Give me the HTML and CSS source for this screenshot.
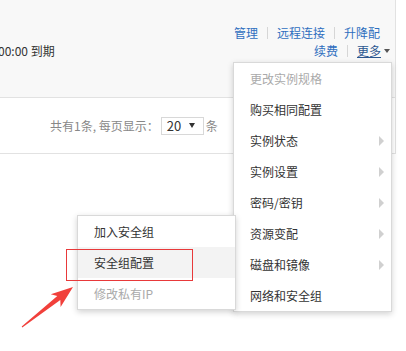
FILE: index.html
```html
<!DOCTYPE html>
<html lang="zh-CN">
<head>
    <meta charset="UTF-8">
    <meta name="viewport" content="width=device-width, initial-scale=1.0">
    <title>实例列表</title>
    <link rel="stylesheet" href="styles.css">
</head>
<body>

    <div class="panel">
        <div class="inst-row">
            <div class="expire">00:00 到期</div>
            <div class="actions">
                <div class="action-line first">
                    <a class="link">管理</a><span class="sep"></span><a class="link">远程连接</a><span class="sep"></span><a class="link">升降配</a>
                </div>
                <div class="action-line">
                    <a class="link">续费</a><span class="sep"></span><a class="more">更多</a><span class="caret"></span>
                </div>
            </div>
        </div>
        <div class="pager">
            共有1条, 每页显示：<span class="page-size"><span>20</span><span class="select-caret"></span></span>条
        </div>
    </div>

    <ul class="dropdown">
        <li class="disabled">更改实例规格</li>
        <li>购买相同配置</li>
        <li class="has-sub">实例状态</li>
        <li class="has-sub">实例设置</li>
        <li class="has-sub">密码/密钥</li>
        <li class="has-sub">资源变配</li>
        <li class="has-sub">磁盘和镜像</li>
        <li>网络和安全组</li>
    </ul>

    <ul class="submenu">
        <li>加入安全组</li>
        <li class="active">安全组配置</li>
        <li class="disabled">修改私有IP</li>
    </ul>

    <div class="mark"></div>

    <svg class="arrow" width="406" height="351" viewBox="0 0 406 351">
        <polygon fill="#f1403b" points="22.3,327.4 60.3,300.1 60.6,306.9 73,287 50.8,294.3 57.3,296.1 21.7,326.6"/>
    </svg>

</body>
</html>
```

FILE: styles.css
```css
body {
    margin: 0;
    font-family: "Microsoft YaHei", "Noto Sans CJK SC", sans-serif;
    font-size: 12px;
    color: #333;
    background: #fff;
    position: relative;
    height: 351px;
    overflow: hidden;
}
.panel {
    width: 395px;
    border-right: 1px solid #e2e2e2;
}
.inst-row {
    display: flex;
    justify-content: space-between;
    align-items: flex-start;
    height: 97px;
    background: #f8f8f8;
    border-bottom: 1px solid #e2e2e2;
}
.expire {
    margin-left: -2px;
    padding-top: 42px;
    line-height: 18px;
}
.actions {
    padding-top: 24px;
    padding-right: 5px;
    text-align: right;
}
.action-line {
    display: flex;
    justify-content: flex-end;
    align-items: center;
    height: 18px;
    line-height: 18px;
}
.action-line.first {
    padding-right: 10px;
}
.link {
    color: #2f6fbf;
}
.more {
    color: #2c5790;
    text-decoration: underline;
}
.sep {
    display: inline-block;
    width: 1px;
    height: 12px;
    background: #d6d6d6;
    margin: 0 9px;
}
.caret {
    display: inline-block;
    margin-left: 3px;
    border-left: 3px solid transparent;
    border-right: 3px solid transparent;
    border-top: 4px solid #555;
}
.pager {
    display: flex;
    align-items: center;
    height: 55px;
    padding-left: 50px;
    color: #888;
    border-bottom: 1px solid #e2e2e2;
}
.page-size {
    display: inline-flex;
    align-items: center;
    justify-content: space-between;
    box-sizing: border-box;
    width: 43px;
    height: 18px;
    margin: 0 2px;
    padding: 0 8px 0 5px;
    border: 1px solid #d8d8d8;
    color: #333;
    font-size: 13px;
}
.select-caret {
    border-left: 3px solid transparent;
    border-right: 3px solid transparent;
    border-top: 5px solid #333;
}
.dropdown,
.submenu {
    position: absolute;
    margin: 0;
    padding: 0;
    list-style: none;
    width: 157px;
    background: #fff;
    border: 1px solid #d9d9d9;
    box-shadow: 0 2px 6px rgba(0, 0, 0, 0.18);
}
.dropdown {
    left: 233px;
    top: 62px;
    z-index: 1;
}
.submenu {
    left: 77px;
    top: 215px;
    z-index: 2;
}
.dropdown li,
.submenu li {
    position: relative;
    height: 31px;
    line-height: 31px;
    padding-left: 16px;
    color: #333;
}
.dropdown li.disabled,
.submenu li.disabled {
    color: #aaa;
}
.submenu li.active {
    background: #f3f3f3;
}
.has-sub::after {
    content: "";
    position: absolute;
    right: 7px;
    top: 11px;
    border-top: 5px solid transparent;
    border-bottom: 5px solid transparent;
    border-left: 5px solid #d0d0d0;
}
.mark {
    position: absolute;
    left: 66px;
    top: 249px;
    width: 125px;
    height: 30px;
    border: 1px solid #e8393a;
    z-index: 3;
}
.arrow {
    position: absolute;
    left: 0;
    top: 0;
    z-index: 4;
    pointer-events: none;
}
```
